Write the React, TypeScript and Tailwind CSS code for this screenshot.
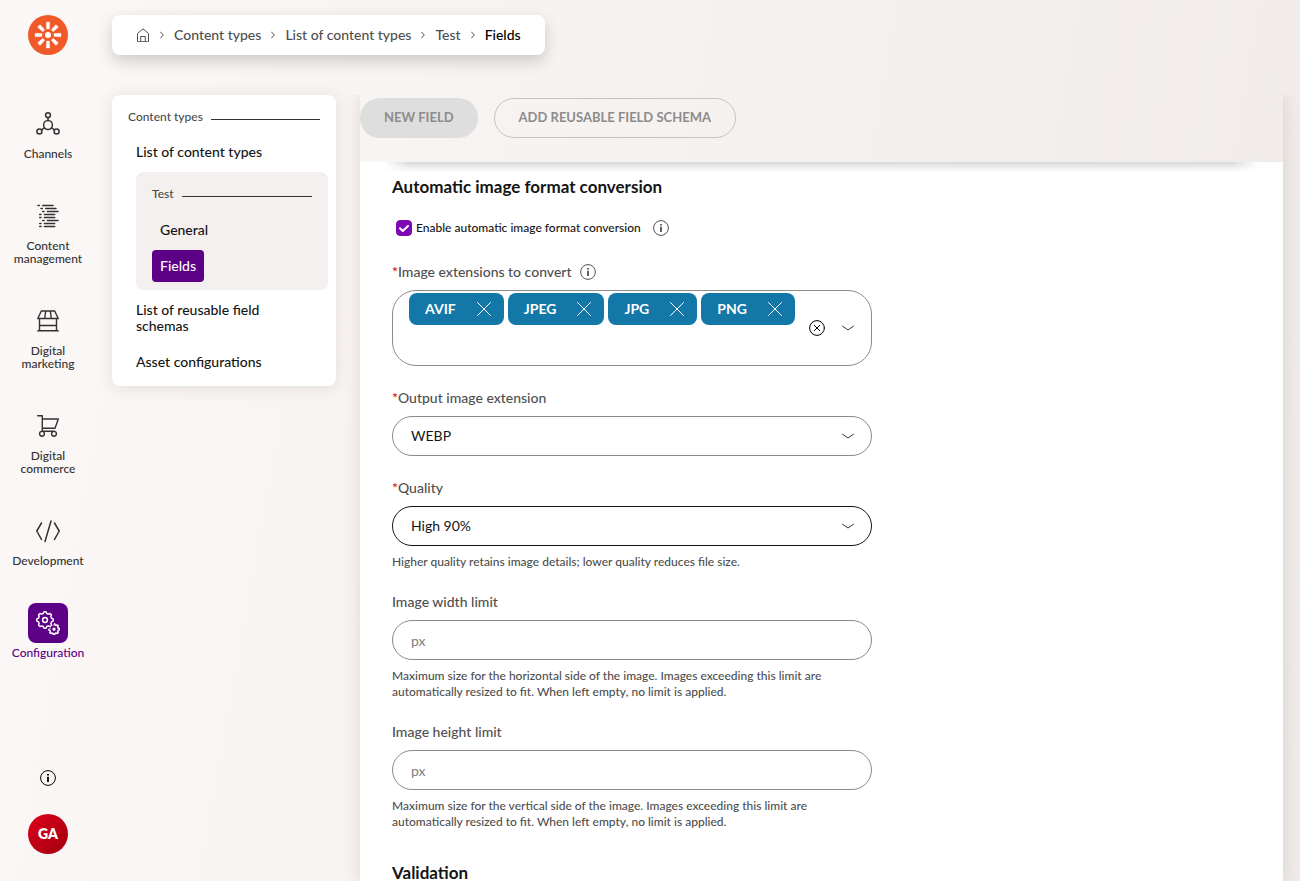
import { useState, type ReactNode } from "react"

const stroke = { fill: "none", stroke: "currentColor", strokeLinecap: "round", strokeLinejoin: "round" } as const

const gearPath = (cx: number, cy: number, inner: number, outer: number, teeth: number) => {
  const steps = teeth * 12
  const points = Array.from({ length: steps }, (_, i) => {
    const angle = (i / steps) * Math.PI * 2
    const wave = Math.max(-1, Math.min(1, Math.cos(angle * teeth) * 1.8))
    const r = (inner + outer) / 2 + (wave * (outer - inner)) / 2
    return `${(cx + r * Math.cos(angle)).toFixed(2)} ${(cy + r * Math.sin(angle)).toFixed(2)}`
  })
  return `M${points.join("L")}Z`
}

const LogoIcon = () => (
  <svg viewBox="0 0 40 40" className="size-10" aria-hidden="true">
    <circle cx="20" cy="20" r="20" fill="#f05a29" />
    <circle cx="20" cy="20" r="3" fill="#fff" />
    {[0, 45, 90, 135, 180, 225, 270, 315].map((angle) => (
      <path key={angle} d="M18.2 7.200q1.800-.6 3.600 0l-.4 6.800h-2.800z" fill="#fff" stroke="#fff" strokeWidth=".3" strokeLinejoin="round" transform={`rotate(${angle} 20 20)`} />
    ))}
  </svg>
)

const ChannelsIcon = () => (
  <svg viewBox="0 0 24 24" className="size-6" strokeWidth="1.5" {...stroke}>
    <circle cx="12" cy="3.200" r="2.400" />
    <circle cx="12" cy="13" r="4.400" />
    <circle cx="3.400" cy="19.500" r="2.500" />
    <circle cx="20.600" cy="19.500" r="2.500" />
    <path d="M12 5.600v3M8.400 15.800l-2.800 2M15.600 15.800l2.800 2" />
  </svg>
)

const ContentIcon = () => (
  <svg viewBox="0 0 24 24" className="size-6" strokeWidth="1.500" {...stroke}>
    <path d="M2 1.500h1.300M6.700 1.500H17M5 4.500h1.300M9.700 4.500H20M6.700 7.500H8M11.400 7.500H22M3.700 10.500H5M8.400 10.500h10.300M3.700 13.500H5M8.400 13.500h10.300M6.700 16.500H8M11.400 16.500H22M3.700 19.500H5M8.400 19.500h10.300M3.700 22.500H5M8.400 22.500h10.300" />
  </svg>
)

const MarketingIcon = () => (
  <svg viewBox="0 0 24 24" className="size-6" strokeWidth="1.4" {...stroke}>
    <path d="M5.300 2h13.400l3.500 7.500H1.800zM9.700 2 8.700 9.500M14.300 2l1 7.500M3.500 9.500v12M20.500 9.500v12M3.500 16.500h17M1.800 21.700h20.400" />
  </svg>
)

const CommerceIcon = () => (
  <svg viewBox="0 0 24 24" className="size-6" strokeWidth="1.4" {...stroke}>
    <path d="M1.700 1.700h4.600v12.600H19L22.300 5h-16M6.300 14.300v3H18" />
    <circle cx="6" cy="19.800" r="2.400" />
    <circle cx="18" cy="19.800" r="2.400" />
  </svg>
)

const DevelopmentIcon = () => (
  <svg viewBox="0 0 24 24" className="size-6" strokeWidth="1.500" {...stroke}>
    <path d="M5.500 4 .8 12l4.700 8.500M15 2 9 22.500M18.500 4l4.700 8-4.700 8.500" />
  </svg>
)

const ConfigurationIcon = () => (
  <svg viewBox="0 0 24 24" className="size-6" strokeWidth="1.500" {...stroke}>
    <path d={gearPath(18, 18.2, 4.2, 5.4, 8)} />
    <circle cx="18" cy="18.200" r=".9" />
    <circle cx="9" cy="9" r="9.600" fill="#5c0086" stroke="none" />
    <path d={gearPath(9, 9, 6.7, 8.2, 8)} />
    <circle cx="9" cy="9" r="2.400" />
  </svg>
)

const InfoIcon = () => (
  <svg viewBox="0 0 16 16" className="size-4" aria-hidden="true">
    <circle cx="8" cy="8" r="7.400" fill="none" stroke="currentColor" />
    <path d="M7.100 4h1.800v1.600H7.100zM7.100 6.700h1.800V12H7.100z" fill="currentColor" />
  </svg>
)

const HomeIcon = () => (
  <svg viewBox="0 0 14 14" className="size-3.5" strokeWidth="1" {...stroke}>
    <path d="M1.500 13.300V5.500L7 .8l5.500 4.700v7.800zM4.700 13.300V8.500h4.600v4.800" />
  </svg>
)

const SeparatorIcon = () => (
  <svg viewBox="0 0 4 8" className="h-2 w-1" strokeWidth="1" {...stroke}>
    <path d="M.5 1 3.300 4 .5 7" />
  </svg>
)

const ChevronIcon = () => (
  <svg viewBox="0 0 14 8" className="h-2 w-3.5 text-[#333]" strokeWidth="1" {...stroke}>
    <path d="M1.500 2.200 7 6l5.500-3.800" />
  </svg>
)

const CrossIcon = () => (
  <svg viewBox="0 0 14 14" className="size-3.5" strokeWidth="1" {...stroke}>
    <path d="m.5.5 13 13M13.500.5l-13 13" />
  </svg>
)

const ClearIcon = () => (
  <svg viewBox="0 0 16 16" className="size-4" {...stroke}>
    <circle cx="8" cy="8" r="7.400" />
    <path d="m5.300 5.300 5.400 5.400M10.700 5.300l-5.400 5.400" />
  </svg>
)

const navItems = [
  { label: "Channels", icon: <ChannelsIcon /> },
  { label: "Content management", icon: <ContentIcon /> },
  { label: "Digital marketing", icon: <MarketingIcon /> },
  { label: "Digital commerce", icon: <CommerceIcon /> },
  { label: "Development", icon: <DevelopmentIcon /> },
  { label: "Configuration", icon: <ConfigurationIcon />, active: true },
]

const Sidebar = () => (
  <aside className="flex w-24 shrink-0 flex-col items-center pt-[15px] pb-[27px] text-[#333]">
    <a href="#" aria-label="Home"><LogoIcon /></a>
    <nav className="mt-[49px] flex flex-col items-center gap-9">
      {navItems.map((item) => (
        <a key={item.label} href="#" className={`flex w-20 flex-col items-center gap-[3px] text-center ${item.active ? "text-[#5c0086]" : ""}`}>
          <span className={`flex size-10 items-center justify-center rounded-lg ${item.active ? "bg-[#5c0086] text-white" : ""}`}>{item.icon}</span>
          <span className="text-xs/[13px] font-medium">{item.label}</span>
        </a>
      ))}
    </nav>
    <button type="button" aria-label="Information" className="mt-auto text-black"><InfoIcon /></button>
    <button type="button" className="mt-7 size-10 rounded-full bg-linear-to-br from-[#e0001b] to-[#a0000f] text-sm font-extrabold text-white">GA</button>
  </aside>
)

const Breadcrumbs = () => (
  <nav aria-label="Breadcrumb" className="flex h-10 items-center gap-2.5 self-start rounded-lg bg-white px-6 text-sm font-medium text-[#4f4f4f] shadow-[0_6px_16px_rgba(0,0,0,0.18)]">
    <a href="#" aria-label="Home"><HomeIcon /></a>
    <SeparatorIcon />
    <a href="#">Content types</a>
    <SeparatorIcon />
    <a href="#">List of content types</a>
    <SeparatorIcon />
    <a href="#">Test</a>
    <SeparatorIcon />
    <span className="text-black">Fields</span>
  </nav>
)

const MenuTitle = ({ children }: { children: ReactNode }) => (
  <div className="flex items-center gap-2 text-xs/4 font-medium text-[#4a4a4a]">
    {children}
    <span className="mt-1 h-px flex-1 bg-[#333]" />
  </div>
)

const SideMenu = () => (
  <nav className="w-56 shrink-0 self-start rounded-lg bg-white pt-3.5 pr-2 pb-4 pl-4 text-sm/4 font-medium text-[#151515] shadow-[0_2px_16px_rgba(80,50,40,0.12)]">
    <div className="pr-2"><MenuTitle>Content types</MenuTitle></div>
    <div className="mt-[19px] flex flex-col pl-2">
      <a href="#">List of content types</a>
      <div className="mt-3 flex flex-col items-start rounded-lg bg-[#f4f0ef] px-4 pt-3.5 pb-2">
        <div className="w-full"><MenuTitle>Test</MenuTitle></div>
        <a href="#" className="mt-5 px-2">General</a>
        <a href="#" aria-current="page" className="mt-3 rounded-sm bg-[#5c0086] p-2 text-white">Fields</a>
      </div>
      <a href="#" className="mt-3 pr-12">List of reusable field schemas</a>
      <a href="#" className="mt-5">Asset configurations</a>
    </div>
  </nav>
)

type FieldProps = { id: string; label: string; required?: boolean; info?: boolean; help?: string; children: ReactNode }

const Field = ({ id, label, required, info, help, children }: FieldProps) => (
  <div>
    <div className="mb-2 flex items-center gap-2 text-sm/5 font-medium text-[#4f4f4f]">
      <label htmlFor={id}>{required && <span className="text-[#d0021b]">*</span>}{label}</label>
      {info && <InfoIcon />}
    </div>
    {children}
    {help && <p className="mt-2 text-xs/4 font-medium text-[#4f4f4f]">{help}</p>}
  </div>
)

const SelectBox = ({ id, options, focused }: { id: string; options: string[]; focused?: boolean }) => (
  <div className="relative">
    <select id={id} className={`h-10 w-full appearance-none rounded-full border bg-white px-[18px] text-sm text-[#151515] outline-none ${focused ? "border-[#151515]" : "border-[#8c8c8c]"}`}>
      {options.map((option) => <option key={option}>{option}</option>)}
    </select>
    <span className="pointer-events-none absolute inset-y-0 right-[17px] flex items-center"><ChevronIcon /></span>
  </div>
)

const ExtensionPicker = ({ id }: { id: string }) => {
  const [items, setItems] = useState(["AVIF", "JPEG", "JPG", "PNG"])

  return (
    <div className="flex min-h-[76px] items-center rounded-3xl border border-[#8c8c8c] pr-4 pl-4">
      <div className="flex flex-1 flex-wrap gap-1 self-stretch pt-0.5">
        {items.map((item) => (
          <span key={item} className="flex h-8 items-center gap-[21px] rounded-lg bg-[#1377a8] pr-[13px] pl-4 text-sm font-bold text-white">
            {item}
            <button type="button" aria-label={`Remove ${item}`} onClick={() => setItems(items.filter((i) => i !== item))}><CrossIcon /></button>
          </span>
        ))}
        <input id={id} className="h-8 w-full min-w-0 bg-transparent text-sm outline-none" />
      </div>
      <button type="button" aria-label="Clear all" onClick={() => setItems([])}><ClearIcon /></button>
      <button type="button" aria-label="Open list" className="ml-4"><ChevronIcon /></button>
    </div>
  )
}

const inputClass = "h-10 w-full rounded-full border border-[#8c8c8c] bg-white px-[18px] text-sm outline-none placeholder:text-[#808080]"

const FieldEditor = () => (
  <form className="flex max-w-[544px] flex-col px-8 pt-[13px]">
    <h2 className="text-[17px]/6 font-bold text-[#151515]">Automatic image format conversion</h2>
    <div className="mt-[17px] flex h-6 items-center pl-1">
      <span className="relative flex size-4">
        <input id="enable" type="checkbox" defaultChecked className="peer size-4 appearance-none rounded-sm border border-[#7d09b3] checked:bg-[#7d09b3]" />
        <svg viewBox="0 0 16 16" strokeWidth="2" className="pointer-events-none absolute inset-0 hidden size-4 text-white peer-checked:block" {...stroke}>
          <path d="m4 8.300 2.800 2.700L12 6" />
        </svg>
      </span>
      <label htmlFor="enable" className="ml-1 text-xs/4 font-medium text-[#151515]">Enable automatic image format conversion</label>
      <span className="ml-3 text-[#4f4f4f]"><InfoIcon /></span>
    </div>
    <div className="mt-[22px] flex flex-col gap-[22px]">
      <Field id="extensions" label="Image extensions to convert" required info>
        <ExtensionPicker id="extensions" />
      </Field>
      <Field id="output" label="Output image extension" required>
        <SelectBox id="output" options={["WEBP", "JPG", "PNG"]} />
      </Field>
      <Field id="quality" label="Quality" required help="Higher quality retains image details; lower quality reduces file size.">
        <SelectBox id="quality" options={["High 90%", "Medium 75%", "Low 50%"]} focused />
      </Field>
      <Field id="width" label="Image width limit" help="Maximum size for the horizontal side of the image. Images exceeding this limit are automatically resized to fit. When left empty, no limit is applied.">
        <input id="width" type="text" placeholder="px" className={inputClass} />
      </Field>
      <Field id="height" label="Image height limit" help="Maximum size for the vertical side of the image. Images exceeding this limit are automatically resized to fit. When left empty, no limit is applied.">
        <input id="height" type="text" placeholder="px" className={inputClass} />
      </Field>
    </div>
    <h2 className="mt-[35px] text-[17px]/4 font-bold text-[#151515]">Validation</h2>
  </form>
)

const App = () => {
  return (
    <div className="flex h-screen overflow-hidden bg-linear-100 from-[#fbf8f7] to-[#f0ebe8] bg-fixed font-['Lato',sans-serif]">
      <Sidebar />
      <div className="flex min-w-0 flex-1 flex-col pt-[15px] pr-[17px] pl-4">
        <Breadcrumbs />
        <div className="mt-10 flex min-h-0 flex-1 gap-6">
          <SideMenu />
          <main className="min-w-0 flex-1 bg-white shadow-[0_0_16px_rgba(80,50,40,0.15)] [clip-path:inset(0_-17px)]">
            <div className="flex h-[67px] gap-4 bg-linear-100 from-[#fbf8f7] to-[#f0ebe8] bg-fixed pt-[3px] text-[13px] font-bold text-[#8c8c8c]">
              <button type="button" disabled className="h-10 rounded-full bg-[#dedede] px-6">NEW FIELD</button>
              <button type="button" disabled className="h-10 rounded-full border border-[#c4c4c4] px-6">ADD REUSABLE FIELD SCHEMA</button>
            </div>
            <div className="mx-6 -mb-2.5 h-2.5 bg-linear-to-b from-black/15 to-transparent [mask-image:linear-gradient(to_right,transparent,black_3%,black_97%,transparent)]" />
            <FieldEditor />
          </main>
        </div>
      </div>
    </div>
  )
}

export default App
